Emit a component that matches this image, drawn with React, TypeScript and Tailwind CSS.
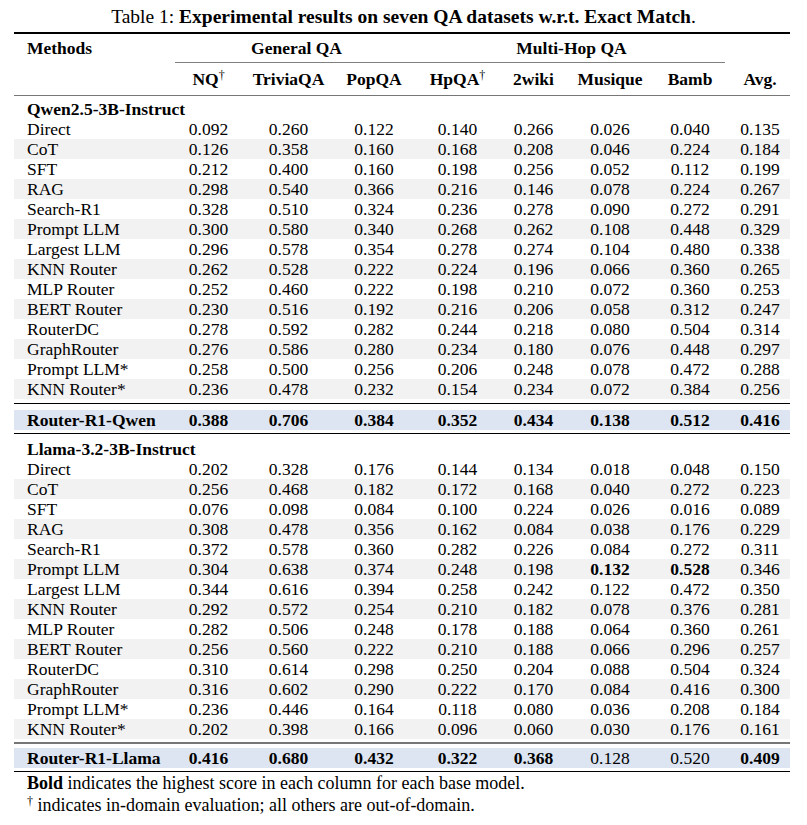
const cols = ['NQ', 'TriviaQA', 'PopQA', 'HpQA', '2wiki', 'Musique', 'Bamb', 'Avg.'];

type Row = { name: string; vals: string[]; bold?: number[] };

const qwen: Row[] = [
  { name: 'Direct', vals: ['0.092', '0.260', '0.122', '0.140', '0.266', '0.026', '0.040', '0.135'] },
  { name: 'CoT', vals: ['0.126', '0.358', '0.160', '0.168', '0.208', '0.046', '0.224', '0.184'] },
  { name: 'SFT', vals: ['0.212', '0.400', '0.160', '0.198', '0.256', '0.052', '0.112', '0.199'] },
  { name: 'RAG', vals: ['0.298', '0.540', '0.366', '0.216', '0.146', '0.078', '0.224', '0.267'] },
  { name: 'Search-R1', vals: ['0.328', '0.510', '0.324', '0.236', '0.278', '0.090', '0.272', '0.291'] },
  { name: 'Prompt LLM', vals: ['0.300', '0.580', '0.340', '0.268', '0.262', '0.108', '0.448', '0.329'] },
  { name: 'Largest LLM', vals: ['0.296', '0.578', '0.354', '0.278', '0.274', '0.104', '0.480', '0.338'] },
  { name: 'KNN Router', vals: ['0.262', '0.528', '0.222', '0.224', '0.196', '0.066', '0.360', '0.265'] },
  { name: 'MLP Router', vals: ['0.252', '0.460', '0.222', '0.198', '0.210', '0.072', '0.360', '0.253'] },
  { name: 'BERT Router', vals: ['0.230', '0.516', '0.192', '0.216', '0.206', '0.058', '0.312', '0.247'] },
  { name: 'RouterDC', vals: ['0.278', '0.592', '0.282', '0.244', '0.218', '0.080', '0.504', '0.314'] },
  { name: 'GraphRouter', vals: ['0.276', '0.586', '0.280', '0.234', '0.180', '0.076', '0.448', '0.297'] },
  { name: 'Prompt LLM*', vals: ['0.258', '0.500', '0.256', '0.206', '0.248', '0.078', '0.472', '0.288'] },
  { name: 'KNN Router*', vals: ['0.236', '0.478', '0.232', '0.154', '0.234', '0.072', '0.384', '0.256'] },
];

const llama: Row[] = [
  { name: 'Direct', vals: ['0.202', '0.328', '0.176', '0.144', '0.134', '0.018', '0.048', '0.150'] },
  { name: 'CoT', vals: ['0.256', '0.468', '0.182', '0.172', '0.168', '0.040', '0.272', '0.223'] },
  { name: 'SFT', vals: ['0.076', '0.098', '0.084', '0.100', '0.224', '0.026', '0.016', '0.089'] },
  { name: 'RAG', vals: ['0.308', '0.478', '0.356', '0.162', '0.084', '0.038', '0.176', '0.229'] },
  { name: 'Search-R1', vals: ['0.372', '0.578', '0.360', '0.282', '0.226', '0.084', '0.272', '0.311'] },
  { name: 'Prompt LLM', vals: ['0.304', '0.638', '0.374', '0.248', '0.198', '0.132', '0.528', '0.346'], bold: [5, 6] },
  { name: 'Largest LLM', vals: ['0.344', '0.616', '0.394', '0.258', '0.242', '0.122', '0.472', '0.350'] },
  { name: 'KNN Router', vals: ['0.292', '0.572', '0.254', '0.210', '0.182', '0.078', '0.376', '0.281'] },
  { name: 'MLP Router', vals: ['0.282', '0.506', '0.248', '0.178', '0.188', '0.064', '0.360', '0.261'] },
  { name: 'BERT Router', vals: ['0.256', '0.560', '0.222', '0.210', '0.188', '0.066', '0.296', '0.257'] },
  { name: 'RouterDC', vals: ['0.310', '0.614', '0.298', '0.250', '0.204', '0.088', '0.504', '0.324'] },
  { name: 'GraphRouter', vals: ['0.316', '0.602', '0.290', '0.222', '0.170', '0.084', '0.416', '0.300'] },
  { name: 'Prompt LLM*', vals: ['0.236', '0.446', '0.164', '0.118', '0.080', '0.036', '0.208', '0.184'] },
  { name: 'KNN Router*', vals: ['0.202', '0.398', '0.166', '0.096', '0.060', '0.030', '0.176', '0.161'] },
];

const qwenOurs: Row = {
  name: 'Router-R1-Qwen',
  vals: ['0.388', '0.706', '0.384', '0.352', '0.434', '0.138', '0.512', '0.416'],
  bold: [0, 1, 2, 3, 4, 5, 6, 7],
};
const llamaOurs: Row = {
  name: 'Router-R1-Llama',
  vals: ['0.416', '0.680', '0.432', '0.322', '0.368', '0.128', '0.520', '0.409'],
  bold: [0, 1, 2, 3, 4, 7],
};

// full-width horizontal rule / spacer row
function Rule({ className }: { className: string }) {
  return (
    <tr>
      <td colSpan={9} className="p-0">
        <div className={className} />
      </td>
    </tr>
  );
}

function DataRow({ row, shaded }: { row: Row; shaded?: boolean }) {
  return (
    <tr className={`h-5 ${shaded ? 'bg-[#f2f2f2]' : ''}`}>
      <td className="p-0 pl-[13px] text-left leading-5 whitespace-nowrap">{row.name}</td>
      {row.vals.map((v, i) => (
        <td key={i} className={`p-0 text-center leading-5 ${row.bold?.includes(i) ? 'font-bold' : ''}`}>
          {v}
        </td>
      ))}
    </tr>
  );
}

function OursRow({ row }: { row: Row }) {
  return (
    <tr className="h-5 bg-[#dce5f1]">
      <td className="p-0 pl-[13px] text-left leading-5 font-bold whitespace-nowrap">{row.name}</td>
      {row.vals.map((v, i) => (
        <td key={i} className={`p-0 text-center leading-5 ${row.bold?.includes(i) ? 'font-bold' : ''}`}>
          {v}
        </td>
      ))}
    </tr>
  );
}

function Section({ title, rows }: { title: string; rows: Row[] }) {
  return (
    <>
      <tr className="h-5">
        <td colSpan={9} className="p-0 pl-[13px] text-left leading-5 font-bold">
          {title}
        </td>
      </tr>
      {rows.map((r, i) => (
        <DataRow key={r.name} row={r} shaded={i % 2 === 1} />
      ))}
    </>
  );
}

export default function App() {
  return (
    <div className="w-[807px] h-[825px] bg-white text-black font-['Liberation_Serif',serif] text-[17.5px]">
      <div className="px-[14px] pt-[6px]">
        <div className="h-[26px] text-center text-[19.5px] leading-[22px] whitespace-nowrap">
          Table 1: <span className="font-bold">Experimental results on seven QA datasets w.r.t. Exact Match</span>.
        </div>
        <table className="w-[776px] table-fixed border-collapse">
          <colgroup>
            <col className="w-[156px]" />
            <col className="w-[77px]" />
            <col className="w-[83px]" />
            <col className="w-[88px]" />
            <col className="w-[79px]" />
            <col className="w-[73px]" />
            <col className="w-[80px]" />
            <col className="w-[80px]" />
            <col className="w-[60px]" />
          </colgroup>
          <tbody>
            <Rule className="h-[1.5px] bg-black" />
            <tr className="h-[29px]">
              <th className="p-0 pl-[13px] text-left font-bold leading-5 align-middle">Methods</th>
              <th colSpan={3} className="p-0 pl-[5px] align-bottom">
                <div className="leading-5 pb-[4px]">General QA</div>
                <div className="h-px bg-[#808080]" />
              </th>
              <th colSpan={4} className="p-0 pr-[5px] align-bottom">
                <div className="leading-5 pb-[4px]">Multi-Hop QA</div>
                <div className="h-px bg-[#808080]" />
              </th>
              <th className="p-0" />
            </tr>
            <tr className="h-[32px]">
              <th className="p-0" />
              {cols.map((c) => (
                <th key={c} className="p-0 text-center font-bold leading-5">
                  {c}
                  {(c === 'NQ' || c === 'HpQA') && <sup className="text-[12px] font-normal">†</sup>}
                </th>
              ))}
            </tr>
            <Rule className="h-px bg-[#777]" />
            <Rule className="h-[3px]" />
            <Section title="Qwen2.5-3B-Instruct" rows={qwen} />
            <Rule className="h-[4px]" />
            <Rule className="h-px bg-black" />
            <Rule className="h-[6px]" />
            <OursRow row={qwenOurs} />
            <Rule className="h-[3px]" />
            <Rule className="h-px bg-black" />
            <Rule className="h-[5px]" />
            <Section title="Llama-3.2-3B-Instruct" rows={llama} />
            <Rule className="h-[3px]" />
            <Rule className="h-[2px] bg-[#777]" />
            <Rule className="h-[4px]" />
            <OursRow row={llamaOurs} />
            <Rule className="h-[3px]" />
            <Rule className="h-px bg-black" />
          </tbody>
        </table>
        <div className="pl-[13px] text-[18px] leading-[22px]">
          <div>
            <span className="font-bold">Bold</span> indicates the highest score in each column for each base model.
          </div>
          <div>
            <sup className="text-[12px]">†</sup> indicates in-domain evaluation; all others are out-of-domain.
          </div>
        </div>
      </div>
    </div>
  );
}
